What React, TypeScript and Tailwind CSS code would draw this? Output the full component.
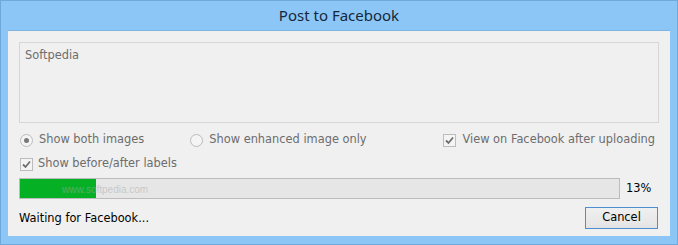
import React from "react";

function Radio({ checked }: { checked?: boolean }) {
  return (
    <span className="flex h-[13px] w-[13px] items-center justify-center rounded-full border border-[#bcbcbc] bg-[#f4f4f4]">
      {checked && <span className="h-[5px] w-[5px] rounded-full bg-[#7a7a7a]" />}
    </span>
  );
}

function Check() {
  return (
    <span className="flex h-[13px] w-[13px] items-center justify-center border border-[#bcbcbc] bg-[#f4f4f4]">
      <svg width="11" height="11" viewBox="0 0 11 11">
        <path d="M2 5.5 L4.5 8 L9 2.5" fill="none" stroke="#6e6e6e" strokeWidth="1.8" />
      </svg>
    </span>
  );
}

export default function App() {
  const font = { fontFamily: '"DejaVu Sans", Verdana, sans-serif' };
  return (
    <div className="flex h-[245px] w-[678px] flex-col border border-[#6fa9dc] bg-[#8cc6f7]">
      <div
        className="flex h-[29px] items-center justify-center text-[15px] text-[#16273a]"
        style={{ fontFamily: '"Noto Sans", "Open Sans", sans-serif' }}
      >
        Post to Facebook
      </div>
      <div className="mx-[7px] flex h-[206px] flex-col border-t border-[#7fb3e0] bg-[#f0f0f0] pl-[11px] pr-[11px] pt-[11px] text-[11.4px] text-[#6d6d6d]" style={font}>
        <div className="h-[81px] border border-[#d6d6d6] px-[5px] pt-[4px]">Softpedia</div>
        <div className="mt-[10px] flex h-[14px] items-center">
          <span className="ml-[1px]"><Radio checked /></span>
          <span className="ml-[6px]">Show both images</span>
          <span className="ml-[46px]"><Radio /></span>
          <span className="ml-[6px]">Show enhanced image only</span>
          <span className="ml-auto"><Check /></span>
          <span className="ml-[6px] mr-[4px]">View on Facebook after uploading</span>
        </div>
        <div className="mt-[10px] flex h-[14px] items-center">
          <span className="ml-[1px]"><Check /></span>
          <span className="ml-[5px]">Show before/after labels</span>
        </div>
        <div className="mt-[7px] flex items-center">
          <div className="relative flex h-[21px] w-[601px] border border-[#bcbcbc] bg-[#e6e6e6]">
            <div className="h-full w-[76px] bg-[#06b025]" />
            <span className="absolute left-[42px] top-[3px] text-[10px] text-[#a8a8a8]/50" style={{ fontFamily: '"Liberation Sans Narrow", "Liberation Sans", sans-serif' }}>www.softpedia.com</span>
          </div>
          <span className="ml-[6px] text-black">13%</span>
        </div>
        <div className="mt-[8px] flex items-center">
          <span className="mt-[2px] text-black">Waiting for Facebook...</span>
          <button className="ml-auto mr-[1px] h-[22px] w-[73px] border border-[#4d8ed0] bg-gradient-to-b from-[#f0f0f0] to-[#e4e4e4] text-black" style={font}>
            Cancel
          </button>
        </div>
      </div>
    </div>
  );
}
